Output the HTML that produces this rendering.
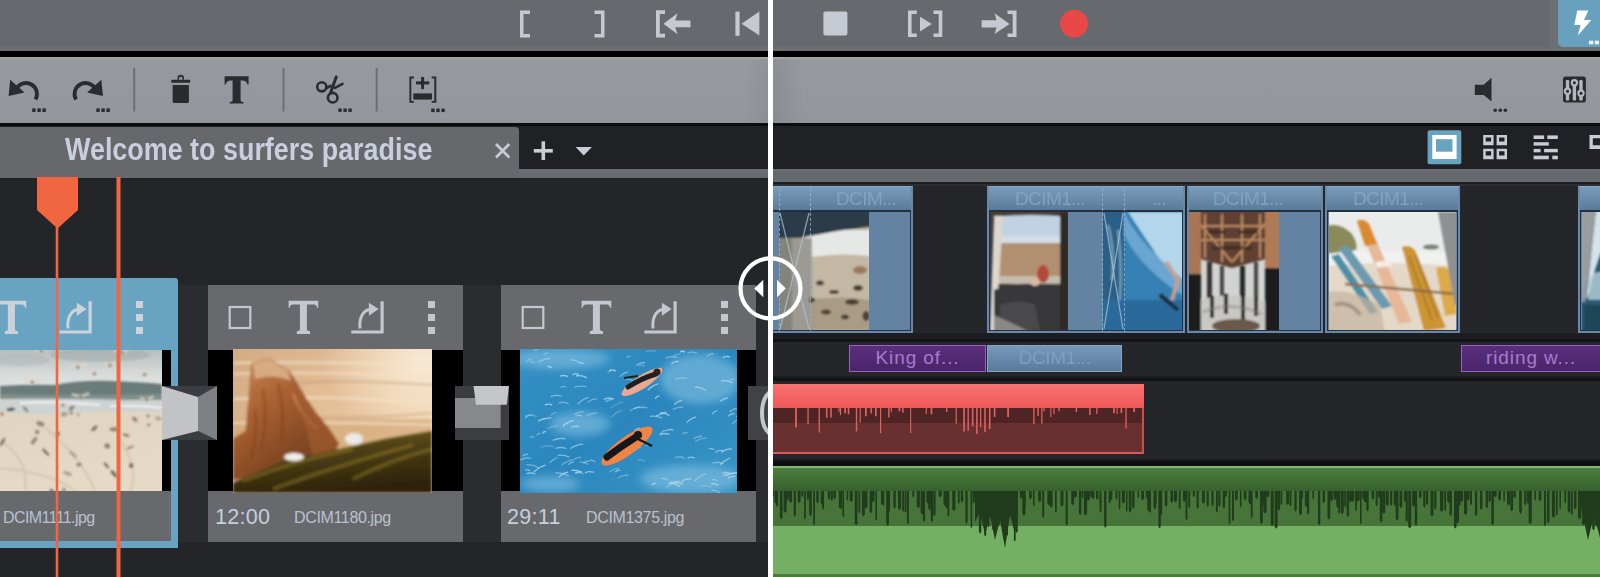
<!DOCTYPE html>
<html><head><meta charset="utf-8">
<style>
html,body{margin:0;padding:0;}
body{width:1600px;height:577px;overflow:hidden;position:relative;background:#242529;font-family:"Liberation Sans",sans-serif;}
.a{position:absolute;}
svg{position:absolute;overflow:hidden;}
</style></head><body>
<!-- top toolbar -->
<div class="a" style="left:0;top:0;width:1600px;height:51px;background:#66696e"></div>
<div class="a" style="left:0;top:47px;width:1600px;height:4px;background:#6b6e73"></div><div class="a" style="left:0;top:51px;width:1600px;height:6px;background:#000"></div>
<!-- toolbar 2 -->
<div class="a" style="left:0;top:57px;width:1600px;height:66px;background:linear-gradient(#a3a7ab 0,#969aa0 4px,#93979d 100%)"></div>
<div class="a" style="left:0;top:123px;width:1600px;height:3px;background:#0c0d0f"></div><div class="a" style="left:745px;top:59px;width:23px;height:64px;background:linear-gradient(90deg,rgba(0,0,0,0),rgba(0,0,0,0.05))"></div><div class="a" style="left:773px;top:59px;width:30px;height:64px;background:linear-gradient(90deg,rgba(0,0,0,0.07),rgba(0,0,0,0))"></div>
<!-- left tab bar -->
<div class="a" style="left:0;top:126px;width:768px;height:43px;background:#202125"></div>
<div class="a" style="left:0;top:127px;width:519px;height:51px;background:#66686c;border-top-right-radius:4px"></div>
<div class="a" style="left:519px;top:169px;width:249px;height:9px;background:linear-gradient(#6c6f73,#65686c)"></div><div class="a" style="left:0;top:178px;width:768px;height:1px;background:#1f2024"></div>
<!-- right tab bar -->
<div class="a" style="left:772px;top:126px;width:828px;height:43px;background:#202125"></div>
<div class="a" style="left:772px;top:169px;width:828px;height:12.5px;background:linear-gradient(#6c6f73,#65686c 30%,#65686c)"></div>
<div class="a" style="left:772px;top:181.5px;width:828px;height:2.5px;background:#1c1d20"></div><div class="a" style="left:772px;top:184px;width:828px;height:2px;background:#2d2e32"></div>

<!-- top toolbar icons -->
<svg class="a" style="left:0;top:0" width="1600" height="51" viewBox="0 0 1600 51">
<g fill="#c5c9d2">
<path d="M520 10.5h10v3.5h-6.5v20h6.5v3.5h-10z"/>
<path d="M604.5 10.5h-10v3.5h6.5v20h-6.5v3.5h10z"/>
<path d="M656 10.3h9v3.6h-5.2v19.9h5.2v3.7h-9z"/>
<path d="M663.4 23.8L677.6 13.2L675.2 20.6H690.5V27.2H675.2L677.6 34.3z"/>
<rect x="735.4" y="11.6" width="4.2" height="24.2"/>
<path d="M741.6 23.7L759.4 11.6V35.6z"/>
<rect x="823.4" y="11.6" width="24" height="24" rx="2"/>
<path d="M908 10.5h8.8v3.6h-5.2v19.4h5.2v3.6h-8.8z"/>
<path d="M942.3 10.5h-8.8v3.6h5.2v19.4h-5.2v3.6h8.8z"/>
<path d="M920 16.7L931.8 24.1L920 31.6z"/>
<path d="M981.6 20.3H996.5L994.5 13.2L1009.5 23.9L994.5 34L996.5 27.6H981.6z"/>
<path d="M1016.5 10.5h-9v3.6h5.2v19.4h-5.2v3.6h9z"/>
</g>
<circle cx="1074" cy="23.7" r="14" fill="#e84848"/>
<rect x="1549" y="0" width="9" height="51" fill="#6c6f74"/><path d="M1558 0H1600V47H1563A5 5 0 0 1 1558 42z" fill="#68a1bd"/>
<path d="M1577.3 10.4H1588.4L1584 20H1591.4L1577.8 35.6L1580.6 25.1H1574.3z" fill="#fff"/>
<rect x="1589" y="40.7" width="4.4" height="3.6" fill="#eef4f8"/>
<rect x="1594.8" y="40.7" width="4.2" height="3.6" fill="#eef4f8"/>
</svg>

<!-- toolbar2 icons -->
<svg class="a" style="left:0;top:0" width="1600" height="123" viewBox="0 0 1600 123">
<g fill="#2a2b2e">
<path d="M10.2 79.8L8.6 96L24.5 92.6z"/>
<path d="M101.35 79.8L102.95 96L87.05 92.6z"/>
<g fill="none" stroke="#2a2b2e" stroke-width="3.8">
<path d="M16.5 88.5A10.6 10.6 0 1 1 35.5 99.5"/>
<path d="M95.05 88.5A10.6 10.6 0 1 0 76.05 99.5"/>
</g>
<rect x="32.2" y="108.4" width="3.4" height="3.6"/><rect x="37.4" y="108.4" width="3.4" height="3.6"/><rect x="42.4" y="108.4" width="3.4" height="3.6"/>
<rect x="96.3" y="108.4" width="3.4" height="3.6"/><rect x="101.4" y="108.4" width="3.4" height="3.6"/><rect x="106.4" y="108.4" width="3.4" height="3.6"/>
<path d="M177.5 79.7V78A3.2 3.2 0 0 1 184 78V79.7H182.5V78.5A1.7 1.7 0 0 0 179 78.5V79.7z"/>
<rect x="171.2" y="79.7" width="19.1" height="3.1" rx="1"/>
<path d="M172.6 84.9H188.9V101.4A1.5 1.5 0 0 1 187.4 102.9H174.1A1.5 1.5 0 0 1 172.6 101.4z"/>
<path d="M224.6 76.2H248.6V84.5H247.6Q246.4 80.6 242.4 80.6H240.6V100.4Q240.6 101.7 243.4 102V103.6H229.8V102Q232.6 101.7 232.6 100.4V80.6H230.8Q226.8 80.6 225.6 84.5H224.6z"/>
<g fill="none" stroke="#2a2b2e">
<circle cx="321.8" cy="86.8" r="4.6" stroke-width="2.6"/>
<circle cx="332.7" cy="97.7" r="4.8" stroke-width="2.6"/>
<path d="M326.3 88L331.5 85.5" stroke-width="2.6"/>
<path d="M330.5 93L336.2 77" stroke-width="3" stroke-linecap="round"/>
<path d="M335 87.8L342.5 83.8" stroke-width="2.6" stroke-linecap="round"/>
</g>
<rect x="338.3" y="108.5" width="3.4" height="3.4"/><rect x="343.4" y="108.5" width="3.4" height="3.4"/><rect x="348.4" y="108.5" width="3.4" height="3.4"/>
<path d="M409.4 76.6H414V78.4H411.3V101H414V102.8H409.4z"/>
<path d="M436.3 76.6H431.6V78.4H434.3V101H431.6V102.8H436.3z"/>
<rect x="416" y="81.4" width="13.3" height="3"/>
<rect x="421.1" y="77" width="3" height="12.1"/>
<rect x="413.3" y="93.4" width="18.7" height="6.2"/>
<rect x="431.2" y="108.6" width="3.4" height="3.5"/><rect x="436.3" y="108.6" width="3.4" height="3.5"/><rect x="441.4" y="108.6" width="3.4" height="3.5"/>
<path d="M1474.8 84.8H1483.7L1491.5 77.8V101.6L1483.7 95H1474.8z"/>
<circle cx="1495.2" cy="110.2" r="1.8"/><circle cx="1500.3" cy="110.2" r="1.8"/><circle cx="1505.4" cy="110.2" r="1.8"/>
<rect x="1563" y="76.6" width="22.9" height="26" rx="2.5"/>
</g>
<g fill="#b4b8bd">
<rect x="1565.8" y="80" width="3.4" height="20.5" rx="1"/>
<rect x="1572.7" y="80" width="3.4" height="20.5" rx="1"/>
<rect x="1579.3" y="80" width="3.4" height="20.5" rx="1"/>
<circle cx="1567.5" cy="91.2" r="3.7"/><circle cx="1574.4" cy="82.8" r="3.7"/><circle cx="1581" cy="93.2" r="3.7"/>
</g>
<g fill="#2a2b2e">
<circle cx="1567.5" cy="91.2" r="1.5"/><circle cx="1574.4" cy="82.8" r="1.5"/><circle cx="1581" cy="93.2" r="1.5"/>
</g>
<g fill="#6c7076">
<rect x="133.2" y="68" width="2" height="43.5"/>
<rect x="282.5" y="68" width="2" height="43.5"/>
<rect x="375.7" y="68" width="2" height="43.5"/>
</g>
</svg>

<!-- tab bar content -->
<div class="a" style="left:65px;top:133px;font-size:31px;line-height:34px;font-weight:bold;color:#c9cfdc;white-space:nowrap;transform:scaleX(0.868);transform-origin:0 0">Welcome to surfers paradise</div>
<svg class="a" style="left:0;top:0" width="1600" height="180" viewBox="0 0 1600 180">
<g stroke="#c8ccd4" stroke-width="2.6" fill="none">
<path d="M496 144L509.3 157.5M509.3 144L496 157.5"/>
</g>
<g fill="#c8ccd4">
<rect x="533.8" y="149" width="19" height="3.6"/>
<rect x="541.5" y="141.3" width="3.6" height="18.7"/>
<path d="M575.6 146.9H591.9L583.75 155.6z"/>
</g>
<rect x="1427.6" y="130.3" width="33.7" height="33.9" rx="2" fill="#68a3c0"/>
<rect x="1432.3" y="135" width="24.3" height="24" fill="#fff"/>
<rect x="1436" y="139.2" width="16.5" height="12.5" fill="#68a3c0"/>
<g fill="#c8ccd4">
<path fill-rule="evenodd" d="M1483.2 135H1493.6V145.3H1483.2zM1485.7 137.5V141.6H1491.1V137.5z"/>
<path fill-rule="evenodd" d="M1496.6 135H1507V145.3H1496.6zM1499.1 137.5V141.6H1504.5V137.5z"/>
<path fill-rule="evenodd" d="M1483.2 148.8H1493.6V159.2H1483.2zM1485.7 151.3V155.4H1491.1V151.3z"/>
<path fill-rule="evenodd" d="M1496.6 148.8H1507V159.2H1496.6zM1499.1 151.3V155.4H1504.5V151.3z"/>
<rect x="1533.6" y="135.4" width="10.5" height="3.6"/><rect x="1547.3" y="135.4" width="10.5" height="3.6"/>
<rect x="1533.6" y="142.2" width="15.2" height="3.4"/>
<rect x="1533.6" y="148.9" width="7" height="3.4"/><rect x="1544.1" y="148.9" width="13.7" height="3.4"/>
<rect x="1533.6" y="155.7" width="15.2" height="3.6"/><rect x="1552.3" y="155.7" width="5.5" height="3.6"/>
<path fill-rule="evenodd" d="M1589.5 135H1602V149.1H1589.5zM1592.8 138.3V145.3H1602V138.3z"/>
</g>
</svg>

<!-- LEFT storyboard -->
<div class="a" style="left:0;top:177px;width:768px;height:400px;overflow:hidden">
 <div class="a" style="left:178px;top:108px;width:30px;height:257px;background:#2b2c30"></div>
 <div class="a" style="left:463px;top:108px;width:38px;height:257px;background:#2b2c30"></div><div class="a" style="left:756px;top:108px;width:20px;height:257px;background:#2b2c30"></div>
 <!-- card1 -->
 <div class="a" style="left:-91px;top:101px;width:269px;height:270px;background:#68a4c1;border-top-right-radius:3px"></div>
 <div class="a" style="left:-84px;top:173px;width:255px;height:141px;background:#000"></div>
 <div class="a" style="left:-84px;top:314px;width:255px;height:50px;background:#67696d"></div>
 <!-- card2 -->
 <div class="a" style="left:208px;top:108px;width:255px;height:257px;background:#67696d"></div>
 <div class="a" style="left:208px;top:173px;width:255px;height:141px;background:#000"></div>
 <!-- card3 -->
 <div class="a" style="left:501px;top:108px;width:255px;height:257px;background:#67696d"></div>
 <div class="a" style="left:501px;top:173px;width:255px;height:141px;background:#000"></div>
 <!--PHOTOS-->
</div>
<svg class="a" style="left:0;top:0" width="768" height="577" viewBox="0 0 768 577">
 <defs>
  <g id="cic">
   <rect x="21.7" y="22" width="20.6" height="21" fill="none" stroke="currentColor" stroke-width="2.2"/>
   <path d="M80.6 15.8H110.2V22.9H109.3Q108.5 19.4 106 19.4H98.9V44.3Q98.9 46.2 102 46.3V49H88.8V46.3Q91.9 46.2 91.9 44.3V19.4H84.8Q82.3 19.4 81.5 22.9H80.6z" fill="currentColor"/>
   <path d="M172.5 16.2H175.7V48.6H143.3V45.5H172.5z" fill="currentColor"/>
   <path d="M152 43.5C151 34 154 25.5 162.5 24.3" fill="none" stroke="currentColor" stroke-width="3"/>
   <path d="M170.6 24L160.9 17.8V30.7z" fill="currentColor"/>
   <rect x="220" y="16" width="7" height="7" fill="currentColor"/>
   <rect x="220" y="29" width="7" height="7" fill="currentColor"/>
   <rect x="220" y="42" width="7" height="7" fill="currentColor"/>
  </g>
 </defs>
 <use href="#cic" x="-84" y="285" style="color:#cdd2da"/>
 <use href="#cic" x="208" y="285" style="color:#c3c7d0"/>
 <use href="#cic" x="501" y="285" style="color:#c3c7d0"/>
</svg>

<!-- photo1 birds -->
<svg class="a" style="left:0;top:350px" width="162" height="141" viewBox="0 0 162 141">
 <defs>
  <linearGradient id="p1sky" x1="0" y1="0" x2="0" y2="1"><stop offset="0" stop-color="#b8bebe"/><stop offset="0.6" stop-color="#d8dcdb"/><stop offset="1" stop-color="#e2e4e2"/></linearGradient>
  <linearGradient id="p1sand" x1="0" y1="0" x2="0.2" y2="1"><stop offset="0" stop-color="#dcd0bc"/><stop offset="1" stop-color="#e6dac6"/></linearGradient>
  <filter id="bl1"><feGaussianBlur stdDeviation="1.3"/></filter>
  <filter id="bl1s"><feGaussianBlur stdDeviation="0.9"/></filter>
 </defs>
 <rect width="162" height="141" fill="url(#p1sand)"/>
 <rect width="162" height="42" fill="url(#p1sky)"/>
 <g filter="url(#bl1)">
 <ellipse cx="100" cy="5" rx="50" ry="7" fill="#a4acac" opacity="0.6"/>
 <ellipse cx="20" cy="10" rx="30" ry="6" fill="#b0b6b6" opacity="0.5"/>
 <path d="M0 36Q30 34 55 35Q80 30 110 31Q140 32 162 34V50H0z" fill="#6a7c7a"/>
 <path d="M0 44Q60 46 162 44V50H0z" fill="#8a9896" opacity="0.7"/>
 <path d="M0 49Q80 48 162 51V62Q110 60 60 63T0 60z" fill="#cdd3d2"/>
 <path d="M20 53Q60 51 100 55M110 56Q140 55 162 58" stroke="#f0f2f2" stroke-width="2" fill="none"/>
 <path d="M0 90Q30 110 25 141M45 78Q80 105 95 141M0 118Q50 122 75 141M120 90Q140 120 130 141" stroke="#cdbfa8" stroke-width="2.5" fill="none" opacity="0.6"/>
 </g>
 <g filter="url(#bl1s)">
<ellipse cx="73.3" cy="104.5" rx="4.8" ry="1.8" fill="#9a8068" opacity="0.53" transform="rotate(43 73.3 104.5)"/>
<ellipse cx="130.2" cy="97.5" rx="3.8" ry="1.4" fill="#5a4a3e" opacity="0.49" transform="rotate(-24 130.2 97.5)"/>
<ellipse cx="131.2" cy="115.6" rx="2.1" ry="2.5" fill="#5a4a3e" opacity="0.70" transform="rotate(18 131.2 115.6)"/>
<ellipse cx="25.5" cy="59.2" rx="3.6" ry="1.3" fill="#6a5644" opacity="0.69" transform="rotate(46 25.5 59.2)"/>
<ellipse cx="126.1" cy="85.1" rx="3.8" ry="1.5" fill="#6a5644" opacity="0.65" transform="rotate(17 126.1 85.1)"/>
<ellipse cx="107.3" cy="96.0" rx="2.8" ry="2.5" fill="#4e4238" opacity="0.58" transform="rotate(25 107.3 96.0)"/>
<ellipse cx="37.2" cy="82.0" rx="2.2" ry="2.2" fill="#5a4a3e" opacity="0.57" transform="rotate(-47 37.2 82.0)"/>
<ellipse cx="10.8" cy="59.4" rx="4.1" ry="1.5" fill="#4e4238" opacity="0.84" transform="rotate(-4 10.8 59.4)"/>
<ellipse cx="64.4" cy="64.1" rx="3.9" ry="2.2" fill="#8a7058" opacity="0.57" transform="rotate(-20 64.4 64.1)"/>
<ellipse cx="2.5" cy="92.0" rx="4.8" ry="1.4" fill="#4e4238" opacity="0.64" transform="rotate(-59 2.5 92.0)"/>
<ellipse cx="78.9" cy="114.6" rx="2.6" ry="1.9" fill="#6a5644" opacity="0.60" transform="rotate(-10 78.9 114.6)"/>
<ellipse cx="64.0" cy="140.2" rx="2.0" ry="2.3" fill="#9a8068" opacity="0.80" transform="rotate(-24 64.0 140.2)"/>
<ellipse cx="34.1" cy="90.7" rx="4.6" ry="2.0" fill="#4e4238" opacity="0.51" transform="rotate(-55 34.1 90.7)"/>
<ellipse cx="71.5" cy="58.8" rx="3.8" ry="2.3" fill="#5a4a3e" opacity="0.49" transform="rotate(-51 71.5 58.8)"/>
<ellipse cx="94.4" cy="78.2" rx="3.8" ry="1.7" fill="#5a4a3e" opacity="0.68" transform="rotate(-45 94.4 78.2)"/>
<ellipse cx="134.8" cy="69.3" rx="3.2" ry="2.0" fill="#8a7058" opacity="0.78" transform="rotate(49 134.8 69.3)"/>
<ellipse cx="40.4" cy="73.8" rx="4.2" ry="2.4" fill="#6a5644" opacity="0.61" transform="rotate(22 40.4 73.8)"/>
<ellipse cx="78.2" cy="64.5" rx="2.1" ry="1.3" fill="#9a8068" opacity="0.55" transform="rotate(56 78.2 64.5)"/>
<ellipse cx="114.1" cy="79.3" rx="4.5" ry="2.0" fill="#8a7058" opacity="0.82" transform="rotate(2 114.1 79.3)"/>
<ellipse cx="158.3" cy="68.5" rx="3.4" ry="2.0" fill="#9a8068" opacity="0.56" transform="rotate(14 158.3 68.5)"/>
<ellipse cx="148.6" cy="74.9" rx="2.0" ry="1.5" fill="#5a4a3e" opacity="0.47" transform="rotate(-30 148.6 74.9)"/>
<ellipse cx="45.7" cy="102.1" rx="4.9" ry="1.3" fill="#6a5644" opacity="0.84" transform="rotate(47 45.7 102.1)"/>
<ellipse cx="106.4" cy="115.4" rx="3.8" ry="1.4" fill="#4e4238" opacity="0.64" transform="rotate(51 106.4 115.4)"/>
<ellipse cx="57.9" cy="83.9" rx="2.1" ry="2.0" fill="#4e4238" opacity="0.74" transform="rotate(-2 57.9 83.9)"/>
<ellipse cx="51.7" cy="140.9" rx="2.2" ry="1.9" fill="#4e4238" opacity="0.74" transform="rotate(48 51.7 140.9)"/>
<ellipse cx="114.0" cy="123.8" rx="4.7" ry="1.7" fill="#5a4a3e" opacity="0.80" transform="rotate(48 114.0 123.8)"/>
<ellipse cx="67.6" cy="123.6" rx="4.6" ry="1.9" fill="#9a8068" opacity="0.60" transform="rotate(19 67.6 123.6)"/>
<ellipse cx="2.0" cy="64.0" rx="2.3" ry="1.4" fill="#8a7058" opacity="0.74" transform="rotate(46 2.0 64.0)"/>
<path d="M55.6 53.1Q62.9 57.1 70.3 52.1" stroke="#ddd6ca" stroke-width="3" fill="none" opacity="0.75"/>
<ellipse cx="62.9" cy="55.1" rx="2" ry="1.5" fill="#7a6a58" opacity="0.7"/>
<path d="M66.0 60.9Q71.4 64.9 76.7 59.9" stroke="#ddd6ca" stroke-width="3" fill="none" opacity="0.75"/>
<ellipse cx="71.4" cy="62.9" rx="2" ry="1.5" fill="#7a6a58" opacity="0.7"/>
<path d="M114.1 0.2Q121.5 4.2 128.9 -0.8" stroke="#ddd6ca" stroke-width="3" fill="none" opacity="0.75"/>
<ellipse cx="121.5" cy="2.2" rx="2" ry="1.5" fill="#7a6a58" opacity="0.7"/>
<path d="M70.1 15.3Q77.9 19.3 85.7 14.3" stroke="#ddd6ca" stroke-width="3" fill="none" opacity="0.75"/>
<ellipse cx="77.9" cy="17.3" rx="2" ry="1.5" fill="#7a6a58" opacity="0.7"/>
<path d="M71.9 44.1Q80.6 48.1 89.2 43.1" stroke="#ddd6ca" stroke-width="3" fill="none" opacity="0.75"/>
<ellipse cx="80.6" cy="46.1" rx="2" ry="1.5" fill="#7a6a58" opacity="0.7"/>
<path d="M35.2 -1.2Q41.4 2.8 47.6 -2.2" stroke="#ddd6ca" stroke-width="3" fill="none" opacity="0.75"/>
<ellipse cx="41.4" cy="0.8" rx="2" ry="1.5" fill="#7a6a58" opacity="0.7"/>
<path d="M104.2 13.2Q109.9 17.2 115.5 12.2" stroke="#ddd6ca" stroke-width="3" fill="none" opacity="0.75"/>
<ellipse cx="109.9" cy="15.2" rx="2" ry="1.5" fill="#7a6a58" opacity="0.7"/>
<path d="M140.0 47.5Q146.7 51.5 153.5 46.5" stroke="#ddd6ca" stroke-width="3" fill="none" opacity="0.75"/>
<ellipse cx="146.7" cy="49.5" rx="2" ry="1.5" fill="#7a6a58" opacity="0.7"/>
<path d="M136.8 22.5Q144.5 26.5 152.1 21.5" stroke="#ddd6ca" stroke-width="3" fill="none" opacity="0.75"/>
<ellipse cx="144.5" cy="24.5" rx="2" ry="1.5" fill="#7a6a58" opacity="0.7"/>
<path d="M23.9 30.3Q32.2 34.3 40.4 29.3" stroke="#ddd6ca" stroke-width="3" fill="none" opacity="0.75"/>
<ellipse cx="32.2" cy="32.3" rx="2" ry="1.5" fill="#7a6a58" opacity="0.7"/>
<path d="M141.6 64.0Q148.1 68.0 154.6 63.0" stroke="#ddd6ca" stroke-width="3" fill="none" opacity="0.75"/>
<ellipse cx="148.1" cy="66.0" rx="2" ry="1.5" fill="#7a6a58" opacity="0.7"/>
<path d="M88.9 21.7Q94.5 25.7 100.0 20.7" stroke="#ddd6ca" stroke-width="3" fill="none" opacity="0.75"/>
<ellipse cx="94.5" cy="23.7" rx="2" ry="1.5" fill="#7a6a58" opacity="0.7"/>
 </g>
</svg>
<!-- photo2 rock -->
<svg class="a" style="left:233px;top:349px" width="199" height="144" viewBox="0 0 199 144">
 <defs>
  <linearGradient id="p2bg" x1="0" y1="0" x2="1" y2="0.6"><stop offset="0" stop-color="#d2ab84"/><stop offset="0.6" stop-color="#e6c29a"/><stop offset="1" stop-color="#f2d8b6"/></linearGradient>
  <linearGradient id="p2rock" x1="0" y1="0" x2="0.6" y2="1"><stop offset="0" stop-color="#c88a58"/><stop offset="0.4" stop-color="#ac6232"/><stop offset="1" stop-color="#6e3c1c"/></linearGradient>
  <linearGradient id="p2grass" x1="0" y1="0" x2="0.3" y2="1"><stop offset="0" stop-color="#7e6a22"/><stop offset="0.45" stop-color="#4e4014"/><stop offset="1" stop-color="#2e240c"/></linearGradient>
  <filter id="bl2"><feGaussianBlur stdDeviation="1.4"/></filter>
 </defs>
 <rect width="199" height="144" fill="url(#p2bg)"/><radialGradient id="p2glow" cx="0.95" cy="0.1" r="0.5"><stop offset="0" stop-color="#fbeedc" stop-opacity="0.9"/><stop offset="1" stop-color="#fbeedc" stop-opacity="0"/></radialGradient><rect width="199" height="144" fill="url(#p2glow)"/>
 <g filter="url(#bl2)">
  <rect x="0" y="70" width="199" height="30" fill="#d4a878" opacity="0.7"/>
  <path d="M0 14Q100 12 199 16M0 25Q100 22 199 28M0 50Q100 46 199 54M0 74Q100 72 199 76" stroke="#f4e2c8" stroke-width="2.2" fill="none" opacity="0.8"/>
  <path d="M60 34Q120 30 199 36M70 68Q130 70 199 64" stroke="#b89070" stroke-width="1.5" fill="none" opacity="0.6"/>
  <path d="M17.8 14.2L36 9L56.7 22L64.5 35L72.3 48L82.7 63.5L95.7 79L106 94.7L101 105L60 122L0 131V89.5L12.6 81.7L15.6 48z" fill="url(#p2rock)"/>
  <path d="M20 15L36 10L55 22L58 32Q40 24 22 30z" fill="#dcb088" opacity="0.9"/><path d="M30 40Q35 70 28 100M45 35Q52 60 48 95M22 60Q25 80 18 110" stroke="#7a4020" stroke-width="3" fill="none" opacity="0.45"/><path d="M60 45Q70 70 85 80" stroke="#d89a68" stroke-width="2.5" fill="none" opacity="0.6"/>
  <path d="M56.7 22L64.5 35L72.3 48L82.7 63.5L95.7 79L106 94.7L101 105L80 110Q75 80 60 40z" fill="#a25c30" opacity="0.7"/>
  <path d="M0 144V133.7L49 113L106 99.9L152.8 89.5L199 81.7V144z" fill="url(#p2grass)"/>
  <path d="M10 132Q60 112 120 100M40 140Q100 118 180 96M120 130Q160 110 199 100" stroke="#a08428" stroke-width="3.5" fill="none" opacity="0.45"/>
  <ellipse cx="61" cy="108" rx="10" ry="4" fill="#f0eee8"/>
  <ellipse cx="121" cy="90" rx="9" ry="6" fill="#eceae6"/>
 </g>
</svg>
<!-- photo3 surfers -->
<svg class="a" style="left:520px;top:349px" width="217" height="144" viewBox="0 0 217 144">
 <defs>
  <linearGradient id="p3bg" x1="0" y1="0" x2="1" y2="1"><stop offset="0" stop-color="#3590c4"/><stop offset="0.5" stop-color="#2a86bd"/><stop offset="1" stop-color="#3a96c6"/></linearGradient>
  <filter id="bl3"><feGaussianBlur stdDeviation="0.7"/></filter>
  <filter id="bl3b"><feGaussianBlur stdDeviation="4"/></filter>
 </defs>
 <rect width="217" height="144" fill="url(#p3bg)"/>
 <g filter="url(#bl3b)" fill="#8cc6e6" opacity="0.55">
  <ellipse cx="40" cy="10" rx="50" ry="10"/>
  <ellipse cx="180" cy="30" rx="40" ry="25"/>
  <ellipse cx="60" cy="75" rx="30" ry="12"/>
  <ellipse cx="170" cy="130" rx="50" ry="14"/>
  <ellipse cx="30" cy="135" rx="30" ry="8"/>
 </g>
 <g filter="url(#bl3)" fill="none" stroke="#d8eef8" stroke-width="1.3" opacity="0.75">
<path d="M51.6 78.4Q55.5 76.2 59.3 77.9" opacity="0.69"/>
<path d="M14.2 1.9Q20.0 -2.3 25.8 -2.5" opacity="0.48"/>
<path d="M216.1 67.7Q222.1 64.7 228.2 65.6" opacity="0.70"/>
<path d="M32.7 91.4Q39.0 88.6 45.3 89.8" opacity="0.76"/>
<path d="M145.7 9.2Q151.5 6.8 157.3 8.4" opacity="0.52"/>
<path d="M6.7 124.6Q11.1 122.8 15.4 125.0" opacity="0.83"/>
<path d="M155.0 132.6Q158.9 131.1 162.9 133.6" opacity="0.59"/>
<path d="M203.0 126.6Q205.2 123.4 207.4 124.3" opacity="0.47"/>
<path d="M209.5 62.8Q214.4 59.1 219.2 59.5" opacity="0.63"/>
<path d="M83.7 50.5Q88.6 48.2 93.6 49.8" opacity="0.85"/>
<path d="M148.0 133.8Q154.0 133.6 160.0 137.4" opacity="0.72"/>
<path d="M35.4 123.9Q42.1 123.4 48.7 126.8" opacity="0.66"/>
<path d="M154.9 30.4Q161.0 27.9 167.2 29.4" opacity="0.51"/>
<path d="M13.8 123.0Q19.8 117.5 25.8 116.1" opacity="0.79"/>
<path d="M89.1 21.7Q92.5 20.0 96.0 22.3" opacity="0.83"/>
<path d="M9.6 88.5Q11.8 86.6 14.0 88.7" opacity="0.53"/>
<path d="M191.2 141.2Q195.5 140.5 199.8 143.9" opacity="0.52"/>
<path d="M16.7 86.4Q18.7 83.5 20.6 84.6" opacity="0.57"/>
<path d="M132.5 22.5Q134.6 20.9 136.8 23.3" opacity="0.52"/>
<path d="M208.0 129.1Q211.9 126.4 215.7 127.7" opacity="0.64"/>
<path d="M139.7 85.8Q144.5 83.6 149.3 85.4" opacity="0.87"/>
<path d="M110.0 62.1Q115.2 58.0 120.4 57.9" opacity="0.52"/>
<path d="M212.2 75.0Q216.1 70.4 220.1 69.8" opacity="0.58"/>
<path d="M125.9 2.9Q130.9 0.7 136.0 2.6" opacity="0.38"/>
<path d="M136.1 67.1Q141.3 63.6 146.5 64.1" opacity="0.74"/>
<path d="M160.2 3.2Q162.5 1.2 164.8 3.2" opacity="0.88"/>
<path d="M54.5 65.7Q59.2 62.2 63.9 62.7" opacity="0.55"/>
<path d="M67.8 53.2Q72.6 49.5 77.3 49.9" opacity="0.56"/>
<path d="M167.6 3.9Q172.4 2.2 177.3 4.5" opacity="0.52"/>
<path d="M48.3 115.7Q51.2 112.4 54.1 113.1" opacity="0.59"/>
<path d="M151.5 14.7Q154.9 11.6 158.4 12.5" opacity="0.81"/>
<path d="M95.1 123.2Q97.9 120.4 100.6 121.5" opacity="0.71"/>
<path d="M192.0 65.0Q194.8 61.5 197.5 62.0" opacity="0.64"/>
<path d="M41.4 116.2Q47.0 111.6 52.6 111.0" opacity="0.50"/>
<path d="M175.2 92.4Q180.9 88.7 186.7 89.0" opacity="0.42"/>
<path d="M63.4 114.3Q66.6 111.4 69.8 112.4" opacity="0.58"/>
<path d="M91.1 59.0Q97.0 54.0 102.9 53.1" opacity="0.35"/>
<path d="M204.7 126.7Q211.5 123.3 218.3 123.8" opacity="0.87"/>
<path d="M201.2 32.0Q206.9 30.9 212.6 33.7" opacity="0.71"/>
<path d="M112.6 41.6Q116.0 38.2 119.5 38.8" opacity="0.39"/>
<path d="M127.7 41.3Q132.9 36.1 138.0 34.9" opacity="0.85"/>
<path d="M150.5 133.0Q156.9 132.4 163.2 135.7" opacity="0.67"/>
<path d="M2.9 107.3Q5.6 104.4 8.3 105.5" opacity="0.71"/>
<path d="M113.9 59.6Q120.6 57.3 127.3 58.9" opacity="0.54"/>
<path d="M54.8 124.1Q59.1 122.5 63.5 125.0" opacity="0.54"/>
<path d="M42.8 77.0Q48.3 72.4 53.8 71.7" opacity="0.79"/>
<path d="M200.0 116.1Q205.1 110.7 210.2 109.2" opacity="0.70"/>
<path d="M187.2 7.2Q190.3 4.0 193.5 4.8" opacity="0.64"/>
<path d="M91.8 68.1Q96.6 62.8 101.5 61.5" opacity="0.38"/>
<path d="M27.5 17.9Q29.8 16.6 32.0 19.2" opacity="0.82"/>
<path d="M18.7 72.3Q22.1 69.2 25.5 70.1" opacity="0.54"/>
<path d="M140.4 84.5Q143.8 80.9 147.3 81.3" opacity="0.53"/>
<path d="M26.9 80.0Q32.3 76.6 37.6 77.2" opacity="0.39"/>
<path d="M38.7 53.8Q43.7 52.3 48.7 54.8" opacity="0.56"/>
<path d="M173.9 89.7Q177.9 86.6 181.9 87.5" opacity="0.62"/>
<path d="M152.5 60.6Q157.9 57.5 163.3 58.5" opacity="0.48"/>
<path d="M116.3 100.1Q118.6 97.6 120.9 99.1" opacity="0.58"/>
<path d="M190.9 134.9Q194.7 133.7 198.5 136.5" opacity="0.79"/>
<path d="M56.9 66.8Q59.5 65.2 62.1 67.5" opacity="0.71"/>
<path d="M192.6 114.1Q197.9 112.4 203.2 114.8" opacity="0.66"/>
<path d="M22.4 84.6Q24.2 81.7 26.0 82.8" opacity="0.78"/>
<path d="M9.6 13.2Q12.1 11.7 14.5 14.2" opacity="0.45"/>
<path d="M5.1 121.2Q7.7 119.6 10.2 122.0" opacity="0.72"/>
<path d="M181.5 137.1Q186.3 135.7 191.2 138.3" opacity="0.37"/>
<path d="M166.5 73.6Q171.4 68.9 176.3 68.2" opacity="0.76"/>
<path d="M202.8 8.8Q206.4 6.5 210.0 8.1" opacity="0.81"/>
<path d="M52.5 25.9Q55.8 23.7 59.0 25.6" opacity="0.76"/>
<path d="M85.4 52.9Q89.3 49.8 93.1 50.7" opacity="0.58"/>
<path d="M18.1 72.0Q24.8 68.5 31.4 68.9" opacity="0.76"/>
<path d="M34.9 99.5Q40.6 97.5 46.4 99.6" opacity="0.63"/>
<path d="M105.0 92.6Q110.8 87.7 116.6 86.8" opacity="0.40"/>
<path d="M162.3 132.0Q166.8 129.1 171.3 130.2" opacity="0.75"/>
<path d="M40.4 38.5Q43.4 36.3 46.4 38.1" opacity="0.52"/>
<path d="M50.4 99.5Q56.8 95.3 63.2 95.1" opacity="0.74"/>
<path d="M89.7 122.9Q94.3 119.2 98.9 119.5" opacity="0.47"/>
<path d="M5.0 69.0Q8.6 65.4 12.1 65.7" opacity="0.55"/>
<path d="M69.9 111.5Q72.5 110.3 75.1 113.1" opacity="0.61"/>
<path d="M130.0 67.4Q136.1 66.3 142.2 69.1" opacity="0.66"/>
<path d="M104.4 103.8Q110.5 100.3 116.6 100.8" opacity="0.75"/>
<path d="M208.4 67.3Q211.3 64.1 214.2 64.9" opacity="0.74"/>
<path d="M146.6 138.1Q152.4 133.7 158.2 133.4" opacity="0.45"/>
<path d="M56.1 27.0Q61.6 25.9 67.0 28.9" opacity="0.84"/>
<path d="M55.3 124.6Q58.8 121.8 62.3 123.0" opacity="0.75"/>
<path d="M18.6 13.3Q24.5 9.3 30.3 9.3" opacity="0.55"/>
<path d="M125.9 97.3Q127.9 94.7 129.8 96.1" opacity="0.59"/>
<path d="M105.4 30.3Q110.2 29.5 115.0 32.8" opacity="0.57"/>
<path d="M118.1 17.2Q121.5 15.2 124.9 17.2" opacity="0.41"/>
<path d="M192.5 130.9Q194.9 129.5 197.3 132.1" opacity="0.56"/>
<path d="M167.6 109.1Q171.1 107.1 174.6 109.1" opacity="0.71"/>
<path d="M174.9 38.2Q180.5 37.8 186.1 41.3" opacity="0.72"/>
<path d="M116.3 16.3Q120.6 13.1 124.9 13.8" opacity="0.74"/>
<path d="M147.2 81.6Q150.2 79.5 153.1 81.5" opacity="0.70"/>
<path d="M38.9 128.1Q43.5 123.7 48.2 123.2" opacity="0.86"/>
<path d="M30.7 47.7Q36.3 45.4 41.9 47.0" opacity="0.66"/>
<path d="M140.5 65.9Q143.7 62.4 146.9 62.9" opacity="0.39"/>
<path d="M155.3 108.6Q160.0 107.0 164.7 109.3" opacity="0.55"/>
<path d="M57.7 55.2Q63.1 49.8 68.5 48.4" opacity="0.63"/>
<path d="M53.6 110.7Q57.2 107.6 60.8 108.5" opacity="0.57"/>
<path d="M117.5 111.1Q121.2 109.7 124.9 112.3" opacity="0.41"/>
<path d="M58.7 14.3Q61.2 12.6 63.8 14.9" opacity="0.75"/>
<path d="M40.1 27.2Q44.2 25.5 48.3 27.8" opacity="0.80"/>
<path d="M162.5 85.2Q165.1 82.6 167.8 83.9" opacity="0.46"/>
<path d="M114.5 81.8Q117.3 78.7 120.1 79.6" opacity="0.78"/>
<path d="M6.5 115.7Q12.8 115.3 19.0 118.9" opacity="0.56"/>
<path d="M119.9 84.0Q124.9 83.4 129.9 86.8" opacity="0.73"/>
<path d="M65.0 123.8Q69.4 121.6 73.8 123.3" opacity="0.75"/>
<path d="M0.5 110.9Q5.8 108.1 11.0 109.3" opacity="0.64"/>
<path d="M99.9 27.9Q103.9 23.4 107.8 22.9" opacity="0.63"/>
<path d="M140.2 64.0Q144.8 63.2 149.5 66.5" opacity="0.84"/>
<path d="M29.4 114.1Q33.8 109.4 38.1 108.7" opacity="0.55"/>
<path d="M50.7 11.2Q55.2 10.3 59.8 13.4" opacity="0.53"/>
<path d="M188.9 100.0Q191.5 98.5 194.2 100.9" opacity="0.68"/>
<path d="M201.2 103.1Q206.6 99.5 212.1 99.8" opacity="0.79"/>
<path d="M202.2 124.1Q206.4 122.4 210.5 124.7" opacity="0.62"/>
<path d="M23.7 6.1Q25.9 3.2 28.0 4.2" opacity="0.44"/>
<path d="M107.9 100.7Q112.5 97.7 117.0 98.6" opacity="0.71"/>
<path d="M66.1 66.9Q71.7 63.5 77.4 64.1" opacity="0.45"/>
<path d="M195.2 103.6Q198.9 100.6 202.6 101.6" opacity="0.64"/>
<path d="M129.4 32.2Q131.3 29.4 133.1 30.6" opacity="0.78"/>
<path d="M31.1 66.2Q33.9 63.0 36.6 63.9" opacity="0.44"/>
<path d="M87.6 24.2Q89.5 21.2 91.4 22.2" opacity="0.44"/>
<path d="M106.4 8.6Q108.5 6.2 110.5 7.8" opacity="0.57"/>
<path d="M152.6 7.4Q156.5 4.4 160.4 5.4" opacity="0.36"/>
<path d="M209.5 31.5Q212.0 29.1 214.4 30.7" opacity="0.44"/>
<path d="M135.1 49.9Q137.3 46.5 139.5 47.1" opacity="0.75"/>
<path d="M59.7 113.4Q63.9 112.5 68.1 115.5" opacity="0.52"/>
<path d="M54.2 38.3Q60.3 36.1 66.4 37.9" opacity="0.54"/>
<path d="M20.3 98.3Q27.2 95.8 34.0 97.3" opacity="0.35"/>
<path d="M6.6 13.0Q9.0 9.5 11.4 10.0" opacity="0.38"/>
<path d="M142.0 129.6Q144.9 128.5 147.8 131.3" opacity="0.61"/>
<path d="M174.4 132.1Q180.0 126.5 185.7 124.9" opacity="0.52"/>
<path d="M131.7 136.3Q134.0 133.5 136.3 134.7" opacity="0.82"/>
<path d="M24.9 56.1Q28.6 54.2 32.2 56.2" opacity="0.86"/>
<path d="M37.9 106.5Q43.5 105.4 49.1 108.2" opacity="0.65"/>
<path d="M200.4 52.2Q204.2 48.7 207.9 49.1" opacity="0.78"/>
<path d="M104.3 38.8Q107.1 36.9 110.0 39.1" opacity="0.68"/>
<path d="M154.2 55.7Q158.2 51.7 162.1 51.7" opacity="0.74"/>
<path d="M5.0 67.2Q10.8 65.3 16.6 67.3" opacity="0.40"/>
<path d="M51.5 121.5Q56.6 120.5 61.7 123.5" opacity="0.83"/>
<path d="M97.6 129.2Q103.0 125.5 108.5 125.8" opacity="0.55"/>
 </g>
 <g filter="url(#bl3)">
 <g transform="rotate(-33 122 33)"><ellipse cx="122" cy="33" rx="24" ry="6.5" fill="#eaa890"/></g>
 <path d="M108 38Q122 29 136 25" stroke="#1c2024" stroke-width="5" fill="none" stroke-linecap="round"/>
 <path d="M118 27L104 29" stroke="#1c2024" stroke-width="2"/>
 <circle cx="137" cy="23" r="3.5" fill="#2a2220"/>
 <g transform="rotate(-36 107 97)"><ellipse cx="107" cy="97" rx="31" ry="9" fill="#f08444"/></g>
 <path d="M87 108Q100 98 116 88" stroke="#15191c" stroke-width="7" fill="none" stroke-linecap="round"/>
 <path d="M116 89L132 97" stroke="#15191c" stroke-width="2.5"/>
 <circle cx="118" cy="86" r="4" fill="#1a1614"/>
 </g>
</svg>
<!-- footers text -->
<div class="a" style="left:3px;top:508px;font-size:16px;line-height:20px;color:#bac1ce;letter-spacing:-0.6px;white-space:nowrap">DCIM1111.jpg</div>
<div class="a" style="left:215px;top:505px;font-size:21.5px;line-height:24px;color:#c8cfdc;letter-spacing:0.3px;white-space:nowrap">12:00</div>
<div class="a" style="left:294px;top:508px;font-size:16px;line-height:20px;color:#bac1ce;letter-spacing:-0.35px;white-space:nowrap">DCIM1180.jpg</div>
<div class="a" style="left:507px;top:505px;font-size:21.5px;line-height:24px;color:#c8cfdc;letter-spacing:0.3px;white-space:nowrap">29:11</div>
<div class="a" style="left:586px;top:508px;font-size:16px;line-height:20px;color:#bac1ce;letter-spacing:-0.35px;white-space:nowrap">DCIM1375.jpg</div>
<!-- transitions -->
<svg class="a" style="left:0;top:0" width="768" height="577" viewBox="0 0 768 577">
 <rect x="162" y="386" width="55" height="54" fill="#3b3d41"/>
 <path d="M162 386L198 397V431L162 440z" fill="#c1c3c7"/>
 <path d="M198 397L217 386V440L198 431z" fill="#7d8084"/>
 <rect x="455" y="386" width="54" height="54" fill="#3b3d41"/>
 <rect x="455" y="398" width="45.6" height="30" fill="#86888c"/>
 <path d="M473.5 386H509L506.8 404.7H476z" fill="#c4c6ca"/>
 <rect x="748" y="386" width="20" height="54" fill="#404246"/><path d="M770 392Q762 398 762 413Q762 428 770 434" stroke="#c4c6ca" stroke-width="4" fill="none"/>
</svg>
<!-- playhead -->
<svg class="a" style="left:0;top:0" width="768" height="577" viewBox="0 0 768 577">
 <path d="M37 177H78V210L57.5 228.5L37 210z" fill="#ef6641"/>
 <rect x="55.7" y="210" width="2.6" height="367" fill="#ef6641"/>
 <rect x="116.5" y="177" width="4" height="400" fill="#ef6641"/>
</svg>

<!-- RIGHT timeline -->
<div class="a" style="left:772px;top:186px;width:828px;height:391px;overflow:hidden;background:#25262a">
 <div class="a" style="left:0;top:147px;width:828px;height:7px;background:#1c1d20"></div>
 <div class="a" style="left:0;top:153px;width:828px;height:3px;background:#111215"></div>
 <div class="a" style="left:0;top:190px;width:828px;height:2px;background:#1a1b1e"></div>
 <div class="a" style="left:0;top:192px;width:828px;height:3px;background:#111215"></div>
 <div class="a" style="left:0;top:273px;width:828px;height:2px;background:#1a1b1e"></div>
 <div class="a" style="left:0;top:275px;width:828px;height:5px;background:#0d0e10"></div>
</div>
<style>
.clip{position:absolute;top:186px;height:147px;background:#5e7c9c;box-sizing:border-box;border:2px solid #6a88a8;border-top:1px solid #8aaac8;}
.clip .hd{position:absolute;left:0;right:0;top:0;height:23px;background:linear-gradient(#7c9cbc,#5a7a9a);border-bottom:2px solid #24303e;}
.clip .bd{position:absolute;left:0;right:0;top:25px;bottom:0;background:#6482a2;border:1.5px solid #22304a;border-top:none;}
.clip .tx{position:absolute;top:1px;font-size:19px;line-height:22px;color:#86a6c6;letter-spacing:-0.6px;white-space:nowrap;opacity:0.85}
.dash{position:absolute;top:188px;width:0;height:143px;border-left:1.5px dashed #9ab4cc;opacity:0.75}
</style>
<div class="clip" style="left:772px;width:141px;border-left:none"><div class="hd"></div><div class="bd"></div><div class="tx" style="left:64px">DCIM...</div></div>
<div class="clip" style="left:987px;width:198px"><div class="hd"></div><div class="bd"></div><div class="tx" style="left:26px">DCIM1...</div><div class="tx" style="left:163px">...</div></div>
<div class="clip" style="left:1187px;width:136px"><div class="hd"></div><div class="bd"></div><div class="tx" style="left:24px">DCIM1...</div></div>
<div class="clip" style="left:1325px;width:135px"><div class="hd"></div><div class="bd"></div><div class="tx" style="left:26px">DCIM1...</div></div>
<div class="clip" style="left:1578px;width:40px"><div class="hd"></div><div class="bd"></div></div>

<svg class="a" style="left:0;top:0" width="1600" height="577" viewBox="0 0 1600 577">
 <defs>
  <filter id="rb"><feGaussianBlur stdDeviation="1.3"/></filter>
  <clipPath id="cA"><rect x="779" y="212" width="90" height="118"/></clipPath>
  <clipPath id="cB1"><rect x="990" y="212" width="78" height="118"/></clipPath>
  <clipPath id="cB2"><rect x="1103" y="212" width="79" height="118"/></clipPath>
  <clipPath id="cC"><rect x="1189" y="212" width="90" height="118"/></clipPath>
  <clipPath id="cD"><rect x="1329" y="212" width="127" height="118"/></clipPath>
  <clipPath id="cE"><rect x="1582" y="212" width="18" height="118"/></clipPath>
 </defs>
 <!-- A -->
 <g clip-path="url(#cA)">
  <rect x="779" y="212" width="90" height="118" fill="#b4aa98"/>
  <g filter="url(#rb)">
   <rect x="805" y="230" width="66" height="36" fill="#e6e8e6"/>
   <path d="M805 258Q840 252 870 256V330H805z" fill="#c2b8a4"/>
   <path d="M805 300Q840 295 870 300V330H805z" fill="#aa9c84"/>
   <path d="M776 210H872V226Q840 230 810 236L776 242z" fill="#2a3a48"/>
   <path d="M776 238H812V332H776z" fill="#9c9a92"/>
   <path d="M776 238H792V332H776z" fill="#84847c"/>
   <g fill="#4a4038"><ellipse cx="820" cy="283" rx="4" ry="2.5"/><ellipse cx="834" cy="292" rx="5" ry="2"/><ellipse cx="826" cy="312" rx="5" ry="2.5"/><ellipse cx="852" cy="302" rx="7" ry="3"/><ellipse cx="845" cy="317" rx="4" ry="2.5"/><ellipse cx="866" cy="316" rx="3.5" ry="5"/><ellipse cx="812" cy="300" rx="3" ry="2.5"/><ellipse cx="858" cy="288" rx="5" ry="3"/></g>
   <ellipse cx="860" cy="270" rx="7" ry="4" fill="#9a7a5a"/>
  </g>
 </g>
 <!-- B1 van -->
 <g clip-path="url(#cB1)">
  <rect x="990" y="212" width="78" height="118" fill="#3c3a3a"/>
  <g filter="url(#rb)">
   <rect x="994" y="214" width="70" height="30" fill="#c0d2e2"/>
   <rect x="994" y="236" width="70" height="8" fill="#d4dde6"/>
   <rect x="994" y="243" width="70" height="34" fill="#b09070"/>
   <rect x="994" y="276" width="70" height="8" fill="#c4bcae"/>
   <path d="M988 210H1070V217Q1030 213 994 217z" fill="#4a3c30"/>
   <path d="M994 216H1003L996 332H990z" fill="#dcd6cc"/>
   <path d="M994 290Q1020 280 1045 286Q1060 282 1068 290V332H994z" fill="#38383a"/>
   <path d="M1000 305Q1020 298 1035 305L1040 332H1000z" fill="#4a4a4c"/>
   <path d="M994 315Q1010 322 1030 332H994z" fill="#8a8886"/>
   <ellipse cx="1043" cy="274" rx="6" ry="9" fill="#b44838"/>
   <ellipse cx="1035" cy="282" rx="5" ry="4" fill="#d8b8a0"/>
   <rect x="1060" y="212" width="8" height="118" fill="#2e2a26"/>
  </g>
 </g>
 <!-- B2 wave -->
 <g clip-path="url(#cB2)">
  <rect x="1103" y="212" width="79" height="118" fill="#3580b4"/>
  <g filter="url(#rb)">
   <path d="M1128 212H1184V282Q1165 270 1152 248Q1138 228 1128 212z" fill="#b4d6ea"/>
   <path d="M1124 212Q1140 245 1184 280V296Q1142 270 1124 235z" fill="#6aa6d0"/>
   <rect x="1101" y="210" width="23" height="122" fill="#2a6088"/>
   <path d="M1101 300H1184V332H1101z" fill="#2a6a9a"/>
   <path d="M1108 225Q1115 250 1112 280M1118 230Q1122 260 1120 300" stroke="#a8c8dc" stroke-width="2" fill="none" opacity="0.7"/>
   <path d="M1166 262L1178 280L1172 300" stroke="#c8a088" stroke-width="4" fill="none"/>
   <path d="M1160 295L1178 310" stroke="#1a2a38" stroke-width="4"/>
  </g>
 </g>
 <!-- C pier -->
 <g clip-path="url(#cC)">
  <rect x="1189" y="212" width="90" height="118" fill="#cfd3d2"/>
  <g filter="url(#rb)">
   <path d="M1187 210H1281V255Q1255 262 1232 268Q1210 262 1187 255z" fill="#5e4030"/>
   <path d="M1195 218L1232 262M1270 218L1232 262M1190 226H1278M1192 240H1272M1205 214V258M1222 214V262M1242 214V262M1260 214V258" stroke="#c8946a" stroke-width="2.2" opacity="0.85"/>
   <path d="M1208 232H1226M1238 232H1258M1212 248H1252" stroke="#2e2018" stroke-width="3" opacity="0.7"/>
   <rect x="1187" y="210" width="14" height="64" fill="#a87656"/>
   <rect x="1187" y="274" width="14" height="58" fill="#1c1a1a"/>
   <rect x="1265" y="210" width="16" height="58" fill="#b07a56"/>
   <rect x="1265" y="268" width="16" height="64" fill="#1c1a1a"/>
   <rect x="1207" y="262" width="5" height="48" fill="#3a3430"/>
   <rect x="1220" y="266" width="4" height="38" fill="#4a4440"/>
   <rect x="1240" y="266" width="5" height="42" fill="#2a2624"/>
   <rect x="1254" y="262" width="4" height="40" fill="#4a4440"/>
   <path d="M1201 300Q1232 290 1265 302V332H1201z" fill="#c8c8c4"/><path d="M1212 296V318M1226 294V314M1243 296V320M1256 298V316" stroke="#2a2420" stroke-width="4"/>
   <path d="M1203 312Q1232 300 1262 314" stroke="#8a8a88" stroke-width="3" fill="none" opacity="0.5"/>
   <ellipse cx="1236" cy="326" rx="24" ry="7" fill="#6a5848"/>
  </g>
 </g>
 <!-- D surfboards -->
 <g clip-path="url(#cD)">
  <rect x="1329" y="212" width="127" height="118" fill="#eaecec"/>
  <g filter="url(#rb)">
   <rect x="1327" y="252" width="131" height="14" fill="#f0f2f0"/>
   <path d="M1327 266Q1380 260 1458 266V332H1327z" fill="#e4d9c8"/>
   <path d="M1327 226Q1340 222 1352 234Q1358 244 1356 250L1327 254z" fill="#8a8a5a"/>
   <ellipse cx="1431" cy="247" rx="8" ry="2.5" fill="#7a8070"/>
   <path d="M1338 248L1348 246L1392 306L1382 309z" fill="#6a9ab0"/>
   <path d="M1331 256L1339 254L1378 312L1370 314z" fill="#4a90a6"/>
   <path d="M1357 221Q1364 218 1369 224L1412 322L1399 324z" fill="#e6b898"/>
   <path d="M1357 221Q1364 218 1369 224L1377 244L1365 246z" fill="#d88a30"/>
   <path d="M1375 262L1390 260L1392 266L1377 268z" fill="#f4ece4"/>
   <path d="M1402 247Q1411 244 1416 252L1446 328L1424 331z" fill="#cc9432"/>
   <path d="M1409 256L1432 320M1416 256L1438 318" stroke="#8a6420" stroke-width="1.5" opacity="0.6"/>
   <path d="M1436 268Q1445 265 1453 272L1457 314L1445 316z" fill="#dcaa46"/>
   <path d="M1327 292Q1350 288 1380 305L1385 332H1327z" fill="#c4b4a0" opacity="0.7"/>
   <path d="M1335 305Q1350 300 1360 315" stroke="#8a7a68" stroke-width="4" fill="none" opacity="0.6"/>
   <path d="M1345 284L1456 294" stroke="#8a6a4a" stroke-width="2.5"/>
   <path d="M1438 212H1458V305H1455z" fill="#8e9092"/>
  </g>
 </g>
 <!-- E -->
 <g clip-path="url(#cE)">
  <rect x="1582" y="212" width="18" height="118" fill="#2a5a72"/>
  <g filter="url(#rb)">
  <path d="M1596 210H1602V250Q1594 270 1590 290L1586 300z" fill="#d6e2e8"/>
  <path d="M1580 210H1596L1585 302H1580z" fill="#9a9c9e"/>
  <path d="M1588 280Q1594 270 1602 272V300H1588z" fill="#b8d0dc" opacity="0.8"/>
  <path d="M1584 305H1602V332H1584z" fill="#1c4658"/>
  </g>
 </g>
 <!-- transition X marks -->
 <g stroke="#b0c6d6" stroke-width="1.3" fill="none" opacity="0.7">
  <path d="M780 213L809 329M809 213L780 329"/>
  <path d="M1104 213L1123 329M1123 213L1104 329"/>
 </g>
</svg>
<div class="dash" style="left:778.5px"></div>
<div class="dash" style="left:809.5px"></div>
<div class="dash" style="left:1101.5px"></div>
<div class="dash" style="left:1124px"></div>

<!-- text track -->
<style>
.tc{position:absolute;top:345px;height:27px;box-sizing:border-box;font-size:19px;line-height:24px;text-align:center;white-space:nowrap;letter-spacing:0.9px}
</style>
<div class="tc" style="left:849px;width:137px;background:linear-gradient(#5a2e7c,#4a256a);border:1.5px solid #9a60c2;color:#a67cce">King of...</div>
<div class="tc" style="left:987px;width:135px;background:linear-gradient(#7898b8,#5a7a9c);border:1px solid #86a4c4;color:#7e9ec0;letter-spacing:-0.4px">DCIM1...</div>
<div class="tc" style="left:1461px;width:150px;background:linear-gradient(#5a2e7c,#4a256a);border:1.5px solid #9a60c2;color:#a67cce;text-align:left;padding-left:24px">riding w...</div>
<!-- red audio -->
<div class="a" style="left:772px;top:384px;width:372px;height:70px;background:#693030;border-bottom:2px solid #d85a5a;box-sizing:border-box;border-right:2px solid #c85050"></div>
<div class="a" style="left:772px;top:384px;width:372px;height:24px;background:linear-gradient(#f87272,#ef5858)"></div>
<div class="a" style="left:772px;top:408px;width:370px;height:15px;background:#4e2425"></div>
<!-- green audio -->
<div class="a" style="left:772px;top:466px;width:828px;height:111px;background:#74b063"></div>
<div class="a" style="left:772px;top:466px;width:828px;height:2px;background:#80ba70"></div>
<div class="a" style="left:772px;top:468px;width:828px;height:23px;background:linear-gradient(#4c7e3e,#37602d)"></div>
<div class="a" style="left:772px;top:491px;width:828px;height:35px;background:#477539"></div>
<div class="a" style="left:772px;top:574px;width:828px;height:3px;background:#4e7a40"></div>

<svg class="a" style="left:0;top:0" width="1600" height="577" viewBox="0 0 1600 577">
<path d="M772.0 491h2.0v4.3l-1.0 2l-1.0 -2z M774.4 491h3.1v10.8l-1.6 2l-1.6 -2z M776.2 491h1.9v14.3l-1.0 2l-1.0 -2z M779.8 491h2.7v26.4l-1.3 2l-1.3 -2z M783.6 491h3.0v19.9l-1.5 2l-1.5 -2z M785.1 491h2.1v11.0l-1.1 2l-1.1 -2z M787.2 491h1.7v7.4l-0.9 2l-0.9 -2z M789.1 491h3.0v10.0l-1.5 2l-1.5 -2z M793.7 491h2.2v23.7l-1.1 2l-1.1 -2z M797.5 491h3.1v10.2l-1.5 2l-1.5 -2z M801.4 491h1.9v4.5l-1.0 2l-1.0 -2z M804.1 491h1.7v26.8l-0.9 2l-0.9 -2z M806.8 491h2.2v7.6l-1.1 2l-1.1 -2z M809.1 491h2.7v23.4l-1.3 2l-1.3 -2z M813.2 491h1.8v32.7l-0.9 2l-0.9 -2z M816.3 491h2.5v10.4l-1.3 2l-1.3 -2z M820.7 491h1.9v11.8l-1.0 2l-1.0 -2z M822.2 491h1.9v16.7l-1.0 2l-1.0 -2z M827.7 491h2.7v7.1l-1.3 2l-1.3 -2z M830.9 491h2.0v8.6l-1.0 2l-1.0 -2z M833.4 491h2.6v6.6l-1.3 2l-1.3 -2z M838.7 491h3.3v16.2l-1.6 2l-1.6 -2z M842.4 491h1.7v24.6l-0.9 2l-0.9 -2z M846.5 491h1.7v8.2l-0.8 2l-0.8 -2z M849.6 491h3.2v9.3l-1.6 2l-1.6 -2z M854.8 491h2.7v32.6l-1.4 2l-1.4 -2z M858.5 491h1.7v20.4l-0.9 2l-0.9 -2z M861.8 491h3.1v23.5l-1.5 2l-1.5 -2z M864.4 491h3.1v15.8l-1.6 2l-1.6 -2z M869.6 491h2.6v20.4l-1.3 2l-1.3 -2z M871.7 491h2.9v9.4l-1.5 2l-1.5 -2z M875.4 491h1.6v27.9l-0.8 2l-0.8 -2z M880.9 491h2.1v12.3l-1.0 2l-1.0 -2z M882.6 491h1.7v13.5l-0.8 2l-0.8 -2z M886.1 491h2.9v33.1l-1.4 2l-1.4 -2z M888.1 491h2.0v19.5l-1.0 2l-1.0 -2z M893.3 491h2.5v16.1l-1.2 2l-1.2 -2z M897.9 491h3.3v17.1l-1.6 2l-1.6 -2z M902.2 491h1.8v19.2l-0.9 2l-0.9 -2z M904.6 491h1.9v19.9l-1.0 2l-1.0 -2z M907.0 491h1.9v31.6l-1.0 2l-1.0 -2z M912.3 491h2.0v4.7l-1.0 2l-1.0 -2z M916.7 491h3.2v15.3l-1.6 2l-1.6 -2z M920.6 491h3.0v21.8l-1.5 2l-1.5 -2z M922.8 491h2.3v29.2l-1.1 2l-1.1 -2z M926.3 491h3.3v10.7l-1.6 2l-1.6 -2z M928.1 491h3.1v17.4l-1.5 2l-1.5 -2z M930.7 491h2.3v29.4l-1.1 2l-1.1 -2z M933.3 491h2.3v23.2l-1.2 2l-1.2 -2z M938.5 491h3.3v4.5l-1.6 2l-1.6 -2z M943.5 491h3.0v13.3l-1.5 2l-1.5 -2z M945.7 491h2.2v16.1l-1.1 2l-1.1 -2z M947.4 491h2.0v23.9l-1.0 2l-1.0 -2z M952.2 491h3.2v18.2l-1.6 2l-1.6 -2z M957.9 491h1.8v11.2l-0.9 2l-0.9 -2z M960.7 491h2.5v9.8l-1.2 2l-1.2 -2z M965.3 491h2.4v31.0l-1.2 2l-1.2 -2z M970.5 491h1.7v35.5l-0.8 2l-0.8 -2z M972.7 491h2.0v10.8l-1.0 2l-1.0 -2z M974.7 491h2.6v6.5l-1.3 2l-1.3 -2z M978.8 491h2.5v40.8l-1.2 2l-1.2 -2z M984.2 491h2.0v43.8l-1.0 2l-1.0 -2z M987.4 491h2.1v34.6l-1.0 2l-1.0 -2z M992.1 491h3.3v38.1l-1.6 2l-1.6 -2z M997.8 491h2.0v32.7l-1.0 2l-1.0 -2z M1003.3 491h2.2v47.3l-1.1 2l-1.1 -2z M1005.4 491h2.6v43.5l-1.3 2l-1.3 -2z M1011.1 491h3.0v28.2l-1.5 2l-1.5 -2z M1013.9 491h1.8v48.7l-0.9 2l-0.9 -2z M1015.8 491h2.0v40.2l-1.0 2l-1.0 -2z M1019.8 491h2.7v6.0l-1.3 2l-1.3 -2z M1022.4 491h3.0v23.1l-1.5 2l-1.5 -2z M1024.3 491h1.5v16.8l-0.8 2l-0.8 -2z M1029.0 491h2.8v6.6l-1.4 2l-1.4 -2z M1032.9 491h1.7v14.1l-0.8 2l-0.8 -2z M1038.1 491h3.0v9.5l-1.5 2l-1.5 -2z M1042.1 491h2.1v25.5l-1.0 2l-1.0 -2z M1047.4 491h3.1v12.6l-1.6 2l-1.6 -2z M1049.7 491h2.9v15.0l-1.5 2l-1.5 -2z M1055.0 491h1.8v20.2l-0.9 2l-0.9 -2z M1060.5 491h3.0v13.8l-1.5 2l-1.5 -2z M1065.7 491h2.1v32.8l-1.1 2l-1.1 -2z M1071.2 491h3.0v12.6l-1.5 2l-1.5 -2z M1073.8 491h3.1v5.1l-1.5 2l-1.5 -2z M1078.9 491h2.4v22.2l-1.2 2l-1.2 -2z M1081.7 491h1.6v6.3l-0.8 2l-0.8 -2z M1083.9 491h3.2v22.6l-1.6 2l-1.6 -2z M1086.6 491h3.3v8.0l-1.6 2l-1.6 -2z M1090.3 491h3.2v5.2l-1.6 2l-1.6 -2z M1092.6 491h1.7v6.7l-0.9 2l-0.9 -2z M1095.9 491h2.6v7.1l-1.3 2l-1.3 -2z M1099.5 491h2.0v19.8l-1.0 2l-1.0 -2z M1104.0 491h2.5v35.1l-1.2 2l-1.2 -2z M1108.6 491h2.2v10.7l-1.1 2l-1.1 -2z M1110.3 491h2.1v7.3l-1.0 2l-1.0 -2z M1115.4 491h2.1v7.0l-1.0 2l-1.0 -2z M1118.6 491h1.8v17.0l-0.9 2l-0.9 -2z M1121.9 491h3.1v10.8l-1.6 2l-1.6 -2z M1126.0 491h1.5v19.5l-0.8 2l-0.8 -2z M1128.7 491h2.7v19.8l-1.3 2l-1.3 -2z M1132.1 491h2.4v16.1l-1.2 2l-1.2 -2z M1137.4 491h1.7v5.7l-0.8 2l-0.8 -2z M1141.1 491h3.0v7.4l-1.5 2l-1.5 -2z M1145.8 491h1.9v6.2l-0.9 2l-0.9 -2z M1147.3 491h3.0v18.8l-1.5 2l-1.5 -2z M1149.1 491h1.9v20.3l-0.9 2l-0.9 -2z M1153.5 491h2.7v16.4l-1.3 2l-1.3 -2z M1155.0 491h1.7v11.7l-0.9 2l-0.9 -2z M1158.3 491h2.5v35.5l-1.2 2l-1.2 -2z M1159.9 491h2.3v22.5l-1.2 2l-1.2 -2z M1164.8 491h2.6v13.9l-1.3 2l-1.3 -2z M1170.4 491h2.8v10.1l-1.4 2l-1.4 -2z M1174.0 491h3.1v9.5l-1.6 2l-1.6 -2z M1178.7 491h2.0v16.6l-1.0 2l-1.0 -2z M1182.9 491h2.6v9.2l-1.3 2l-1.3 -2z M1185.5 491h2.0v27.4l-1.0 2l-1.0 -2z M1188.3 491h1.9v15.4l-1.0 2l-1.0 -2z M1192.7 491h2.3v4.6l-1.1 2l-1.1 -2z M1196.5 491h2.3v16.1l-1.1 2l-1.1 -2z M1201.9 491h3.0v11.0l-1.5 2l-1.5 -2z M1206.6 491h2.2v14.1l-1.1 2l-1.1 -2z M1211.3 491h2.3v13.5l-1.1 2l-1.1 -2z M1216.0 491h1.9v20.0l-1.0 2l-1.0 -2z M1218.4 491h2.1v14.3l-1.1 2l-1.1 -2z M1222.7 491h2.4v15.7l-1.2 2l-1.2 -2z M1224.7 491h2.2v4.3l-1.1 2l-1.1 -2z M1228.6 491h1.8v31.7l-0.9 2l-0.9 -2z M1232.1 491h1.9v28.5l-1.0 2l-1.0 -2z M1234.9 491h2.9v7.8l-1.4 2l-1.4 -2z M1239.9 491h1.6v14.8l-0.8 2l-0.8 -2z M1243.7 491h2.7v7.5l-1.3 2l-1.3 -2z M1248.5 491h3.2v11.5l-1.6 2l-1.6 -2z M1250.8 491h1.8v25.8l-0.9 2l-0.9 -2z M1255.2 491h2.8v6.2l-1.4 2l-1.4 -2z M1259.9 491h2.9v31.3l-1.4 2l-1.4 -2z M1261.8 491h1.7v13.6l-0.9 2l-0.9 -2z M1263.4 491h3.2v20.8l-1.6 2l-1.6 -2z M1266.5 491h2.8v4.8l-1.4 2l-1.4 -2z M1270.7 491h3.0v33.3l-1.5 2l-1.5 -2z M1274.7 491h2.9v35.8l-1.5 2l-1.5 -2z M1277.7 491h2.4v17.7l-1.2 2l-1.2 -2z M1280.6 491h1.7v12.2l-0.9 2l-0.9 -2z M1286.2 491h2.8v12.3l-1.4 2l-1.4 -2z M1289.5 491h2.0v13.7l-1.0 2l-1.0 -2z M1294.4 491h2.3v18.8l-1.2 2l-1.2 -2z M1299.0 491h3.0v22.5l-1.5 2l-1.5 -2z M1300.8 491h2.4v6.4l-1.2 2l-1.2 -2z M1304.9 491h3.0v14.3l-1.5 2l-1.5 -2z M1307.1 491h2.1v22.0l-1.1 2l-1.1 -2z M1312.4 491h1.6v6.8l-0.8 2l-0.8 -2z M1317.9 491h2.4v32.6l-1.2 2l-1.2 -2z M1322.6 491h2.4v10.5l-1.2 2l-1.2 -2z M1327.5 491h2.8v26.7l-1.4 2l-1.4 -2z M1330.3 491h2.5v8.7l-1.2 2l-1.2 -2z M1333.5 491h2.8v7.3l-1.4 2l-1.4 -2z M1336.2 491h1.9v15.2l-0.9 2l-0.9 -2z M1338.1 491h1.9v21.6l-0.9 2l-0.9 -2z M1340.5 491h3.3v21.2l-1.6 2l-1.6 -2z M1344.2 491h1.9v15.0l-0.9 2l-0.9 -2z M1346.6 491h2.5v24.2l-1.2 2l-1.2 -2z M1349.2 491h2.8v9.5l-1.4 2l-1.4 -2z M1351.2 491h3.1v8.9l-1.5 2l-1.5 -2z M1355.1 491h1.9v18.4l-0.9 2l-0.9 -2z M1356.8 491h3.0v8.8l-1.5 2l-1.5 -2z M1360.0 491h1.6v31.6l-0.8 2l-0.8 -2z M1362.1 491h3.3v7.0l-1.6 2l-1.6 -2z M1364.0 491h2.9v10.1l-1.5 2l-1.5 -2z M1366.4 491h2.3v18.5l-1.2 2l-1.2 -2z M1371.6 491h2.6v7.1l-1.3 2l-1.3 -2z M1375.7 491h1.9v13.5l-1.0 2l-1.0 -2z M1378.0 491h1.8v5.6l-0.9 2l-0.9 -2z M1379.8 491h2.6v29.4l-1.3 2l-1.3 -2z M1382.5 491h2.8v21.1l-1.4 2l-1.4 -2z M1385.9 491h2.9v13.2l-1.5 2l-1.5 -2z M1390.0 491h2.3v13.3l-1.1 2l-1.1 -2z M1393.8 491h3.0v13.1l-1.5 2l-1.5 -2z M1395.6 491h2.9v27.7l-1.4 2l-1.4 -2z M1399.5 491h2.8v15.2l-1.4 2l-1.4 -2z M1403.9 491h2.4v9.0l-1.2 2l-1.2 -2z M1405.7 491h2.1v29.2l-1.1 2l-1.1 -2z M1408.2 491h3.0v35.5l-1.5 2l-1.5 -2z M1412.2 491h2.7v14.0l-1.4 2l-1.4 -2z M1414.8 491h2.4v33.1l-1.2 2l-1.2 -2z M1419.0 491h2.6v5.8l-1.3 2l-1.3 -2z M1423.2 491h2.2v14.9l-1.1 2l-1.1 -2z M1426.1 491h2.1v12.6l-1.1 2l-1.1 -2z M1430.5 491h3.0v23.5l-1.5 2l-1.5 -2z M1434.3 491h2.1v17.1l-1.1 2l-1.1 -2z M1440.0 491h3.3v19.1l-1.6 2l-1.6 -2z M1444.2 491h1.9v18.1l-0.9 2l-0.9 -2z M1447.2 491h2.9v10.3l-1.4 2l-1.4 -2z M1449.6 491h2.3v23.3l-1.2 2l-1.2 -2z M1454.0 491h2.6v35.7l-1.3 2l-1.3 -2z M1456.5 491h2.5v30.6l-1.3 2l-1.3 -2z M1458.3 491h2.4v13.1l-1.2 2l-1.2 -2z M1460.3 491h2.8v9.0l-1.4 2l-1.4 -2z M1463.9 491h3.3v22.3l-1.6 2l-1.6 -2z M1466.4 491h3.2v7.8l-1.6 2l-1.6 -2z M1470.0 491h2.0v12.6l-1.0 2l-1.0 -2z M1474.9 491h2.4v23.3l-1.2 2l-1.2 -2z M1479.9 491h2.6v17.0l-1.3 2l-1.3 -2z M1485.6 491h2.5v15.5l-1.2 2l-1.2 -2z M1488.6 491h2.3v9.4l-1.2 2l-1.2 -2z M1491.4 491h2.5v32.4l-1.3 2l-1.3 -2z M1493.8 491h2.9v4.4l-1.4 2l-1.4 -2z M1498.3 491h2.7v7.9l-1.4 2l-1.4 -2z M1503.3 491h1.6v9.0l-0.8 2l-0.8 -2z M1506.9 491h3.1v12.7l-1.5 2l-1.5 -2z M1510.3 491h2.8v18.6l-1.4 2l-1.4 -2z M1513.5 491h2.4v5.5l-1.2 2l-1.2 -2z M1519.1 491h2.7v20.9l-1.3 2l-1.3 -2z M1524.2 491h2.2v12.6l-1.1 2l-1.1 -2z M1527.0 491h3.1v11.6l-1.5 2l-1.5 -2z M1528.6 491h3.2v31.6l-1.6 2l-1.6 -2z M1534.4 491h1.7v8.3l-0.9 2l-0.9 -2z M1538.6 491h2.8v8.4l-1.4 2l-1.4 -2z M1543.9 491h2.1v33.6l-1.0 2l-1.0 -2z M1547.0 491h2.5v30.4l-1.3 2l-1.3 -2z M1551.8 491h3.1v24.9l-1.5 2l-1.5 -2z M1555.9 491h1.8v23.1l-0.9 2l-0.9 -2z M1559.4 491h1.6v16.6l-0.8 2l-0.8 -2z M1564.3 491h1.8v10.8l-0.9 2l-0.9 -2z M1567.6 491h2.7v19.9l-1.3 2l-1.3 -2z M1570.9 491h1.9v22.5l-0.9 2l-0.9 -2z M1574.0 491h2.5v16.4l-1.3 2l-1.3 -2z M1577.9 491h3.3v26.5l-1.6 2l-1.6 -2z M1582.2 491h2.7v32.5l-1.4 2l-1.4 -2z M1586.9 491h2.4v33.3l-1.2 2l-1.2 -2z M1592.2 491h2.6v37.6l-1.3 2l-1.3 -2z M1595.2 491h2.7v33.7l-1.4 2l-1.4 -2z M1599.7 491h2.6v38.4l-1.3 2l-1.3 -2z" fill="#213c1d"/>
<path d="M975 491H1018V520L1014 530L1010 515L1005 548L1000 520L995 540L990 516L985 535L980 512L975 522z" fill="#213c1d"/><path d="M1578 491H1600V538L1594 515L1588 540L1582 512z" fill="#213c1d"/>
<path d="M795.1 408h1.8v19.6h-1.8z M807.4 408h1.3v16.6h-1.3z M818.6 408h1.3v24.5h-1.3z M826.0 408h1.5v9.7h-1.5z M830.2 408h1.6v9.6h-1.6z M838.4 408h1.2v4.2h-1.2z M840.0 408h1.1v7.2h-1.1z M844.3 408h1.7v5.2h-1.7z M847.7 408h1.6v6.4h-1.6z M855.8 408h1.4v23.5h-1.4z M859.6 408h1.2v14.6h-1.2z M865.0 408h1.8v8.3h-1.8z M870.4 408h1.5v5.5h-1.5z M875.0 408h1.7v8.2h-1.7z M880.0 408h1.2v25.3h-1.2z M888.1 408h1.5v9.5h-1.5z M890.8 408h1.2v4.2h-1.2z M898.5 408h1.8v3.3h-1.8z M902.1 408h1.5v4.7h-1.5z M910.1 408h1.1v25.0h-1.1z M925.7 408h1.2v6.0h-1.2z M930.6 408h1.8v6.2h-1.8z M946.0 408h1.4v4.0h-1.4z M955.6 408h1.2v15.8h-1.2z M963.2 408h1.7v23.4h-1.7z M967.5 408h1.4v22.9h-1.4z M971.8 408h1.7v18.3h-1.7z M976.1 408h1.6v26.1h-1.6z M980.0 408h1.3v19.3h-1.3z M984.2 408h1.6v23.9h-1.6z M988.9 408h1.6v20.9h-1.6z M993.8 408h1.7v8.9h-1.7z M1007.2 408h1.8v8.9h-1.8z M1033.2 408h1.4v15.9h-1.4z M1037.3 408h1.6v7.8h-1.6z M1041.2 408h1.3v15.6h-1.3z M1043.4 408h1.4v3.2h-1.4z M1050.3 408h1.1v9.3h-1.1z M1053.4 408h1.2v5.9h-1.2z M1058.3 408h1.5v3.3h-1.5z M1075.6 408h1.5v4.0h-1.5z M1089.1 408h1.6v7.0h-1.6z M1096.2 408h1.3v6.0h-1.3z M1113.1 408h1.8v5.2h-1.8z M1116.5 408h1.2v6.3h-1.2z M1120.5 408h1.7v5.1h-1.7z M1125.4 408h1.3v20.4h-1.3z M1133.2 408h1.8v4.1h-1.8z" fill="#df6060"/>
</svg>

<!-- divider -->
<div class="a" style="left:768px;top:0;width:5px;height:577px;background:#fff"></div>

<!-- split handle -->
<svg class="a" style="left:0;top:0" width="1600" height="577" viewBox="0 0 1600 577">
 <circle cx="770.5" cy="288.4" r="30" fill="none" stroke="#fff" stroke-width="4.2"/>
 <path d="M754.3 288.5L763.3 279.8V297.2z" fill="#fff"/>
 <path d="M785.8 288.5L777 279.8V297.2z" fill="#fff"/>
</svg>
</body></html>
